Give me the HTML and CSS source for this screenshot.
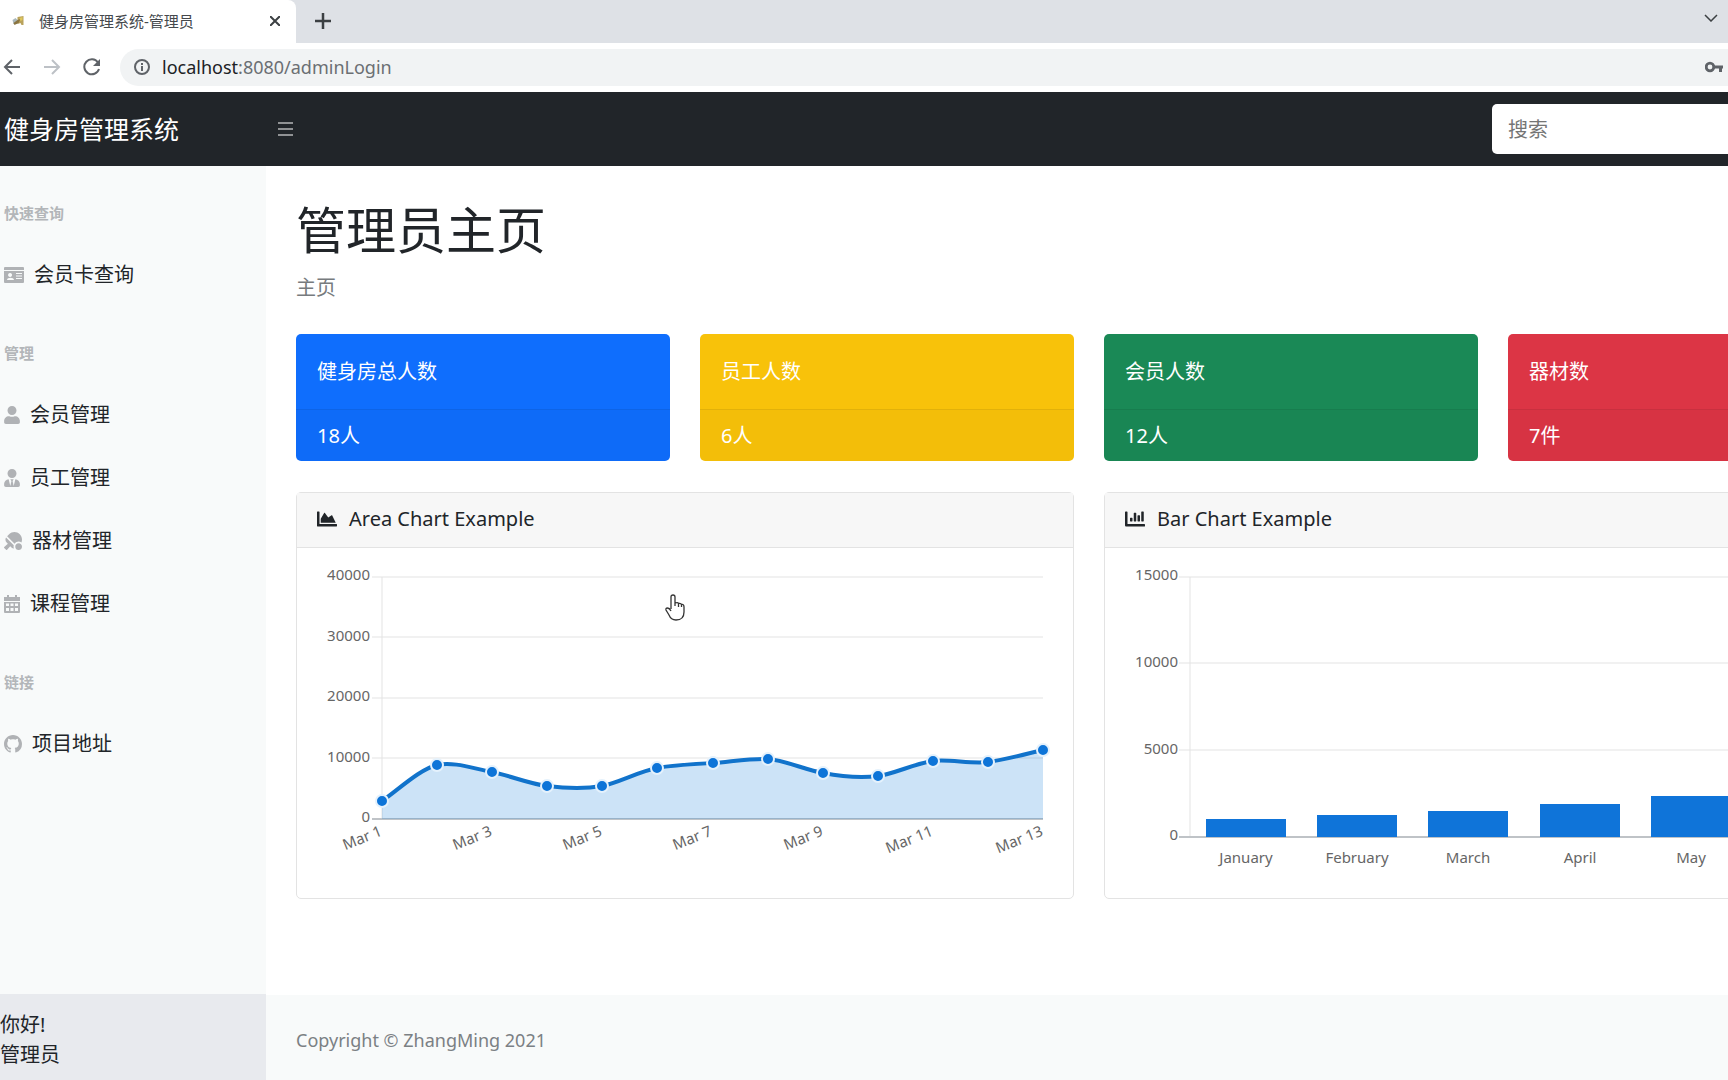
FILE: index.html
```html
<!DOCTYPE html>
<html lang="zh-CN">
<head>
<meta charset="utf-8">
<title>健身房管理系统-管理员</title>
<link rel="stylesheet" href="styles.css">
</head>
<body>
<div class="tabstrip">
  <div class="tab">
    <svg class="favicon" viewBox="0 0 12 12" aria-hidden="true"><path fill="#b9a25c" d="M5 2l6-1v9H9L8 8 5 9z"/><path fill="#aab8bc" d="M0 5l3-2 2 2v4H1z"/><path fill="#8a7440" d="M1 8l4-3 3-1-2 4-4 2z"/><path fill="#dfc75c" d="M7 3l3-1v3L8 6z"/></svg>
    <span class="tab-title">健身房管理系统-管理员</span>
    <button class="icon-button" aria-label="关闭"><svg width="10" height="10" viewBox="0 0 10 10"><path d="M0 0l10 10M10 0L0 10" stroke="#3c4043" stroke-width="2"/></svg></button>
  </div>
  <button class="icon-button new-tab" aria-label="新标签页"><svg width="16" height="16" viewBox="0 0 16 16"><path d="M8 0v16M0 8h16" stroke="#3c4043" stroke-width="2.500"/></svg></button>
  <button class="icon-button tab-search" aria-label="搜索标签页"><svg width="14" height="8" viewBox="0 0 14 8"><path d="M1 1l6 6 6-6" fill="none" stroke="#3c4043" stroke-width="1.500"/></svg></button>
</div>
<div class="toolbar">
  <button class="icon-button" aria-label="后退"><svg width="18" height="18" viewBox="0 0 18 18"><path d="M17 9H2M9 2L2 9l7 7" fill="none" stroke="#5f6368" stroke-width="2"/></svg></button>
  <button class="icon-button" aria-label="前进"><svg width="18" height="18" viewBox="0 0 18 18"><path d="M1 9h15M9 2l7 7-7 7" fill="none" stroke="#bdc1c6" stroke-width="2"/></svg></button>
  <button class="icon-button" aria-label="重新加载"><svg width="18" height="18" viewBox="0 0 18 18"><path d="M15 4.500A7.500 7.500 0 1 0 16 11" fill="none" stroke="#5f6368" stroke-width="2"/><path d="M17 1v7h-7z" fill="#5f6368"/></svg></button>
  <div class="address">
    <svg width="16" height="16" viewBox="0 0 16 16" aria-hidden="true"><circle cx="8" cy="8" r="7" fill="none" stroke="#5f6368" stroke-width="2"/><path d="M8 7v5M8 4v2" stroke="#5f6368" stroke-width="2"/></svg>
    <span class="url"><b>localhost</b>:8080/adminLogin</span>
    <svg width="18" height="12" viewBox="0 0 18 12" aria-hidden="true"><circle cx="5" cy="6" r="3.800" fill="none" stroke="#5f6368" stroke-width="2.800"/><path d="M8 4.500h10v3h-1V11h-3V7.500H8z" fill="#5f6368"/></svg>
  </div>
</div>

<header class="navbar">
  <a class="brand" href="#">健身房管理系统</a>
  <button class="icon-button menu-toggle" aria-label="切换菜单"><svg width="15" height="14" viewBox="0 0 15 14"><path d="M0 1h15M0 7h15M0 13h15" stroke="#909294" stroke-width="2"/></svg></button>
  <input class="search" type="text" placeholder="搜索" aria-label="搜索">
</header>

<div class="layout">
  <aside class="sidebar">
    <nav>
      <h2 class="nav-heading">快速查询</h2>
      <a class="nav-link" href="#"><svg width="20" height="18" viewBox="0 0 20 18"><path fill-rule="evenodd" d="M1 1h18q1 0 1 1v14q0 1-1 1H1q-1 0-1-1V2q0-1 1-1zm-1 3v1h20V4zm6 3a2 2 0 1 0 .1 0zM3 14h7c0-3-7-3-7 0zm9-7v1h6V7zm0 2.500v1h6v-1zm0 2.500v1h6v-1z"/></svg>会员卡查询</a>
      <h2 class="nav-heading">管理</h2>
      <a class="nav-link" href="#"><svg width="16" height="18" viewBox="0 0 448 512"><path d="M224 256c70.700 0 128-57.300 128-128S294.700 0 224 0 96 57.300 96 128s57.300 128 128 128zm89.600 32h-16.700c-22.200 10.200-46.900 16-72.900 16s-50.600-5.800-72.900-16h-16.700C60.200 288 0 348.200 0 422.400V464c0 26.500 21.500 48 48 48h352c26.500 0 48-21.500 48-48v-41.600c0-74.200-60.200-134.400-134.400-134.400z"/></svg>会员管理</a>
      <a class="nav-link" href="#"><svg width="16" height="18" viewBox="0 0 448 512"><path d="M224 256c70.700 0 128-57.300 128-128S294.700 0 224 0 96 57.300 96 128s57.300 128 128 128zm95.800 32.600L272 480l-32-136 32-56h-96l32 56-32 136-47.800-191.400C56.900 292 0 350.300 0 422.400V464c0 26.500 21.500 48 48 48h352c26.500 0 48-21.500 48-48v-41.600c0-72.100-56.900-130.400-128.200-133.800z"/></svg>员工管理</a>
      <a class="nav-link" href="#"><svg width="18" height="18" viewBox="0 0 512 512"><path d="M496.200 296.500C527.700 218.700 512 126.200 449 63.100 365.100-21 229-21 145.100 63.200l-56 56.100 211.500 211.500c46.100-62.100 131.500-77.400 195.600-34.300zm-217.900 79.700L57.900 155.900c-27.300 45.300-21.700 105 17.300 144.100l34.500 34.600L6.700 424c-8.600 7.500-9.100 20.700-1 28.800l53.400 53.500c8 8.100 21.200 7.600 28.700-1L177.100 402l35.700 35.700c19.700 19.700 44.600 30.500 70.300 33.300-7.100-17-11-35.600-11-55.100-.1-13.800 2.500-27 6.200-39.700zM416 320c-53 0-96 43-96 96s43 96 96 96 96-43 96-96-43-96-96-96z"/></svg>器材管理</a>
      <a class="nav-link" href="#"><svg width="16" height="18" viewBox="0 0 16 18"><path fill-rule="evenodd" d="M3 0h2v2h6V0h2v2h3v4H0V2h3zM0 7h16v10q0 1-1 1H1q-1 0-1-1zm2 1.500V11h3V8.500zm4.500 0V11h3V8.500zm4.500 0V11h3V8.500zM2 13v3h3v-3zm4.500 0v3h3v-3zm4.500 0v3h3v-3z"/></svg>课程管理</a>
      <h2 class="nav-heading">链接</h2>
      <a class="nav-link" href="#"><svg width="18" height="18" viewBox="0 0 16 16"><path d="M8 0C3.580 0 0 3.580 0 8c0 3.540 2.290 6.530 5.470 7.590.4.070.55-.170.55-.380 0-.190-.010-.820-.010-1.490-2.010.370-2.530-.490-2.690-.940-.090-.230-.480-.940-.820-1.130-.280-.150-.680-.520-.010-.530.630-.010 1.080.580 1.230.820.720 1.210 1.870.870 2.330.660.070-.520.280-.870.510-1.070-1.780-.2-3.640-.890-3.640-3.950 0-.870.310-1.590.820-2.150-.080-.2-.360-1.020.080-2.120 0 0 .670-.210 2.200.820.640-.180 1.320-.270 2-.270s1.360.090 2 .270c1.530-1.040 2.200-.820 2.200-.820.440 1.100.160 1.920.080 2.120.510.560.820 1.270.820 2.150 0 3.070-1.870 3.750-3.650 3.950.290.250.540.730.540 1.480 0 1.070-.010 1.930-.010 2.200 0 .210.150.460.550.380A8.010 8.010 0 0 0 16 8c0-4.420-3.580-8-8-8z"/></svg>项目地址</a>
    </nav>
    <div class="user">你好!<br>管理员</div>
  </aside>

  <div class="content">
    <main>
      <h1>管理员主页</h1>
      <p class="breadcrumb">主页</p>
      <div class="stats">
        <section class="stat blue"><div class="stat-body">健身房总人数</div><div class="stat-footer">18人</div></section>
        <section class="stat yellow"><div class="stat-body">员工人数</div><div class="stat-footer">6人</div></section>
        <section class="stat green"><div class="stat-body">会员人数</div><div class="stat-footer">12人</div></section>
        <section class="stat red"><div class="stat-body">器材数</div><div class="stat-footer">7件</div></section>
      </div>
      <div class="charts">
        <section class="chart-card">
          <div class="chart-header"><svg width="20" height="20" viewBox="0 0 512 512"><path d="M500 384c6.600 0 12 5.400 12 12v40c0 6.600-5.400 12-12 12H12c-6.600 0-12-5.400-12-12V76c0-6.600 5.400-12 12-12h40c6.600 0 12 5.400 12 12v308h436zM372.700 159.500L288 216l-85.300-113.700c-5.100-6.800-15.500-6.300-19.900 1L96 248v104h384l-89.900-187.800c-3.200-6.500-11.400-8.700-17.400-4.700z"/></svg><span>Area Chart Example</span></div>
          <div class="chart-body">
            <svg class="chart" viewBox="0 0 736 310">
              <path class="grid" d="M55 9h671M55 69h671M55 130h671M55 190h671M65 9v242"/>
              <path class="axis" d="M55 251h671"/>
              <path class="area" d="M65 251V233C81 222 103 201 120 197C136 193 158 201 175 204C191 207 213 216 230 218C246 220 268 221 285 218C301 215 323 203 340 200C356 197 379 196 396 195C412 194 434 190 451 191C467 192 489 202 506 205C522 208 544 210 561 208C577 206 599 195 616 193C632 191 654 196 671 194C687 192 709 186 726 182V251z"/>
              <path class="line" d="M65 233C81 222 103 201 120 197C136 193 158 201 175 204C191 207 213 216 230 218C246 220 268 221 285 218C301 215 323 203 340 200C356 197 379 196 396 195C412 194 434 190 451 191C467 192 489 202 506 205C522 208 544 210 561 208C577 206 599 195 616 193C632 191 654 196 671 194C687 192 709 186 726 182"/>
              <g class="points"><circle cx="65" cy="233" r="6"/><circle cx="120" cy="197" r="6"/><circle cx="175" cy="204" r="6"/><circle cx="230" cy="218" r="6"/><circle cx="285" cy="218" r="6"/><circle cx="340" cy="200" r="6"/><circle cx="396" cy="195" r="6"/><circle cx="451" cy="191" r="6"/><circle cx="506" cy="205" r="6"/><circle cx="561" cy="208" r="6"/><circle cx="616" cy="193" r="6"/><circle cx="671" cy="194" r="6"/><circle cx="726" cy="182" r="6"/></g>
              <g class="end"><text x="53" y="12">40000</text><text x="53" y="73">30000</text><text x="53" y="133">20000</text><text x="53" y="194">10000</text><text x="53" y="254">0</text>
              <text transform="translate(66 267) rotate(-22)">Mar 1</text><text transform="translate(176 267) rotate(-22)">Mar 3</text><text transform="translate(286 267) rotate(-22)">Mar 5</text><text transform="translate(396 267) rotate(-22)">Mar 7</text><text transform="translate(507 267) rotate(-22)">Mar 9</text><text transform="translate(617 267) rotate(-22)">Mar 11</text><text transform="translate(727 267) rotate(-22)">Mar 13</text></g>
            </svg>
            <svg class="cursor" width="20" height="27" viewBox="0 0 20 27" aria-hidden="true"><path d="M6 15V3q0-2 2-2t2 2v6q3-1 3.500.5Q16 9 16.500 10.500 19 10 19 13v5q0 8-8 8-5 0-7-5l-3-5q-.5-2 1.500-2T6 17M10 8v4M13.500 9.500V13M16.500 10.500V13" fill="#fff" stroke="#333" stroke-width="1.300"/></svg>
          </div>
        </section>
        <section class="chart-card">
          <div class="chart-header"><svg width="20" height="20" viewBox="0 0 512 512"><path d="M332.800 320h38.400c6.400 0 12.800-6.400 12.800-12.800V172.800c0-6.400-6.400-12.800-12.800-12.800h-38.400c-6.400 0-12.800 6.400-12.800 12.800v134.400c0 6.400 6.400 12.800 12.800 12.800zm96 0h38.400c6.400 0 12.800-6.400 12.800-12.800V76.800c0-6.400-6.400-12.800-12.800-12.800h-38.400c-6.400 0-12.800 6.400-12.800 12.800v230.400c0 6.400 6.400 12.800 12.800 12.800zm-288 0h38.400c6.400 0 12.800-6.400 12.800-12.800v-70.400c0-6.400-6.400-12.800-12.800-12.800h-38.400c-6.400 0-12.800 6.400-12.800 12.800v70.400c0 6.400 6.400 12.800 12.800 12.800zm96 0h38.400c6.400 0 12.800-6.400 12.800-12.800V108.800c0-6.400-6.400-12.800-12.800-12.800h-38.400c-6.400 0-12.800 6.400-12.800 12.800v198.400c0 6.400 6.400 12.800 12.800 12.800zM496 384H64V80c0-8.800-7.200-16-16-16H16C7.200 64 0 71.200 0 80v336c0 17.700 14.300 32 32 32h464c8.800 0 16-7.200 16-16v-32c0-8.800-7.200-16-16-16z"/></svg><span>Bar Chart Example</span></div>
          <div class="chart-body">
            <svg class="chart" viewBox="0 0 736 310">
              <path class="grid" d="M54 9h674M54 95h674M54 182h674M65 9v260"/>
              <path class="axis" d="M54 269h674"/>
              <g class="bars"><rect x="81" y="251" width="80" height="18"/><rect x="192" y="247" width="80" height="22"/><rect x="303" y="243" width="80" height="26"/><rect x="415" y="236" width="80" height="33"/><rect x="526" y="228" width="80" height="41"/></g>
              <g class="end"><text x="53" y="12">15000</text><text x="53" y="99">10000</text><text x="53" y="186">5000</text><text x="53" y="272">0</text></g>
              <g class="mid"><text x="121" y="295">January</text><text x="232" y="295">February</text><text x="343" y="295">March</text><text x="455" y="295">April</text><text x="566" y="295">May</text></g>
            </svg>
          </div>
        </section>
      </div>
    </main>
    <footer>Copyright © ZhangMing 2021</footer>
  </div>
</div>
</body>
</html>
```
FILE: styles.css
```css
* { box-sizing: border-box; }

body {
  margin: 0;
  height: 100vh;
  display: flex;
  flex-direction: column;
  overflow: hidden;
  background: #fff;
  color: #212529;
  font: 20px/30px "Noto Sans", "Noto Sans CJK SC", sans-serif;
}

svg { flex: none; display: block; }
a { color: inherit; text-decoration: none; }
h1, h2, p { margin: 0; font-weight: 400; }

.icon-button {
  display: flex;
  padding: 0;
  border: 0;
  background: none;
}

/* Browser frame */
.tabstrip {
  flex: none;
  height: 43px;
  display: flex;
  align-items: center;
  padding-right: 10px;
  background: #dee1e6;
}
.tab {
  align-self: stretch;
  width: 296px;
  display: flex;
  align-items: center;
  gap: 14px;
  padding: 0 16px 2px 12px;
  border-top-right-radius: 8px;
  background: #fff;
}
.favicon { width: 13px; height: 12px; }
.tab-title { flex: 1; font-size: 15px; line-height: 24px; color: #45494d; }
.new-tab { margin-left: 19px; padding-bottom: 2px; }
.tab-search { margin-left: auto; padding-bottom: 8px; }

.toolbar {
  flex: none;
  height: 49px;
  display: flex;
  align-items: center;
  gap: 22px;
  padding: 0 0 1px 3px;
}
.address {
  flex: 1;
  height: 37px;
  display: flex;
  align-items: center;
  gap: 12px;
  margin-left: -3px;
  padding: 0 5px 0 14px;
  border-radius: 19px 0 0 19px;
  background: #f1f3f4;
}
.url { flex: 1; color: #6b6f73; font-size: 18px; }
.url b { font-weight: 400; color: #202124; }

/* Top bar */
.navbar {
  flex: none;
  height: 74px;
  display: flex;
  align-items: center;
  background: #212529;
}
.brand { width: 278px; padding-left: 4px; font-size: 25px; color: #fff; }
.search {
  width: 260px;
  height: 50px;
  margin: 0 -24px 0 auto;
  padding: 0 16px;
  border: 0;
  border-radius: 5px;
  background: #fff;
  font: 20px/30px "Noto Sans", "Noto Sans CJK SC", sans-serif;
}
.search::placeholder { color: #757575; opacity: 1; }

.layout { flex: 1; min-height: 0; display: flex; overflow: hidden; }

/* Side navigation */
.sidebar {
  flex: none;
  width: 266px;
  display: flex;
  flex-direction: column;
  justify-content: space-between;
  background: #f8fafa;
}
.nav-heading {
  padding: 35px 4px 18px;
  font-size: 15px;
  line-height: 24px;
  font-weight: 700;
  color: #b3b6b9;
}
.nav-link {
  height: 63px;
  display: flex;
  align-items: center;
  gap: 10px;
  padding-left: 4px;
}
.nav-link svg { fill: #b0b2b5; }
.user {
  padding: 16px 0 10px;
  background: #e8eaee;
}

/* Page content; it runs past the right edge of the window */
.content {
  flex: none;
  width: calc(100% - 82px);
  display: flex;
  flex-direction: column;
  justify-content: space-between;
}
main { padding: 28px 30px 0; }
h1 { font-size: 50px; line-height: 72px; }
.breadcrumb { margin: 7px 0 31px; color: #777b7e; }

.stats {
  display: grid;
  grid-template-columns: repeat(4, 1fr);
  gap: 30px;
  margin-bottom: 31px;
}
.stat { border-radius: 5px; color: #fff; }
.stat-body { padding: 23px 21px 22px; }
.stat-footer {
  padding: 11px 21px 10px;
  border-top: 1px solid rgba(0, 0, 0, 0.07);
  border-radius: 0 0 5px 5px;
  background: rgba(0, 0, 0, 0.02);
}
.blue { background: #0f6efd; }
.yellow { background: #f8c20a; }
.green { background: #1a8956; }
.red { background: #dc3545; }

.charts { display: grid; grid-template-columns: 1fr 1fr; gap: 30px; }
.chart-card { border: 1px solid #e3e3e3; border-radius: 5px; }
.chart-header {
  display: flex;
  align-items: center;
  gap: 12px;
  padding: 11px 20px 13px;
  border-bottom: 1px solid #e3e3e3;
  background: #f7f7f7;
}
.chart-header svg { fill: #212529; }
.chart-body { position: relative; padding: 20px; }
.chart { width: 100%; }
.cursor { position: absolute; left: 368px; top: 46px; }

.chart text { font-size: 15px; fill: #666; }
.grid { fill: none; stroke: #e3e3e3; stroke-width: 1; }
.axis { fill: none; stroke: #bfc3c7; stroke-width: 2; }
.area { fill: rgba(2, 117, 216, 0.2); }
.line { fill: none; stroke: #1173cb; stroke-width: 4; }
.points { fill: #0d74d8; stroke: #e4f1fc; stroke-width: 2; }
.bars { fill: #0f74d9; }
.end { text-anchor: end; }
.mid { text-anchor: middle; }

footer {
  padding: 30px 30px 25px;
  background: #f8fafa;
  color: #7b8084;
  font-size: 18px;
}
```
